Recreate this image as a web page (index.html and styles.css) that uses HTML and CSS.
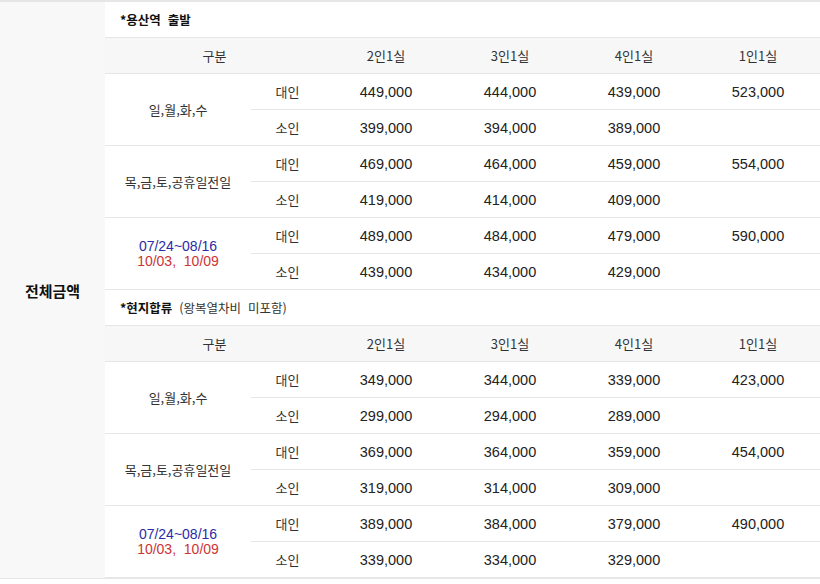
FILE: index.html
```html
<!DOCTYPE html>
<html lang="ko">
<head>
<meta charset="utf-8">
<link rel="stylesheet" href="styles.css">
</head>
<body>
<div class="price-box">
  <div class="aside"><span class="aside-title">전체금액</span></div>
  <div class="content">
    <section class="section">
      <div class="sec-title"><b>*용산역&nbsp; 출발</b></div>
      <div class="grid">
        <div class="cell head span2 ko">구분</div>
        <div class="cell head ko">2인1실</div>
        <div class="cell head ko">3인1실</div>
        <div class="cell head ko">4인1실</div>
        <div class="cell head ko">1인1실</div>

        <div class="cell group ko">일,월,화,수</div>
        <div class="cell ko">대인</div>
        <div class="cell num">449,000</div>
        <div class="cell num">444,000</div>
        <div class="cell num">439,000</div>
        <div class="cell num">523,000</div>
        <div class="cell ko">소인</div>
        <div class="cell num">399,000</div>
        <div class="cell num">394,000</div>
        <div class="cell num">389,000</div>
        <div class="cell num"></div>

        <div class="cell group ko">목,금,토,공휴일전일</div>
        <div class="cell ko">대인</div>
        <div class="cell num">469,000</div>
        <div class="cell num">464,000</div>
        <div class="cell num">459,000</div>
        <div class="cell num">554,000</div>
        <div class="cell ko">소인</div>
        <div class="cell num">419,000</div>
        <div class="cell num">414,000</div>
        <div class="cell num">409,000</div>
        <div class="cell num"></div>

        <div class="cell group dates"><span class="blue">07/24~08/16</span><span class="red">10/03,&nbsp; 10/09</span></div>
        <div class="cell ko">대인</div>
        <div class="cell num">489,000</div>
        <div class="cell num">484,000</div>
        <div class="cell num">479,000</div>
        <div class="cell num">590,000</div>
        <div class="cell ko">소인</div>
        <div class="cell num">439,000</div>
        <div class="cell num">434,000</div>
        <div class="cell num">429,000</div>
        <div class="cell num"></div>
      </div>
    </section>
    <section class="section">
      <div class="sec-title"><b>*현지합류</b>&nbsp; <span class="note">(왕복열차비&nbsp; 미포함)</span></div>
      <div class="grid">
        <div class="cell head span2 ko">구분</div>
        <div class="cell head ko">2인1실</div>
        <div class="cell head ko">3인1실</div>
        <div class="cell head ko">4인1실</div>
        <div class="cell head ko">1인1실</div>

        <div class="cell group ko">일,월,화,수</div>
        <div class="cell ko">대인</div>
        <div class="cell num">349,000</div>
        <div class="cell num">344,000</div>
        <div class="cell num">339,000</div>
        <div class="cell num">423,000</div>
        <div class="cell ko">소인</div>
        <div class="cell num">299,000</div>
        <div class="cell num">294,000</div>
        <div class="cell num">289,000</div>
        <div class="cell num"></div>

        <div class="cell group ko">목,금,토,공휴일전일</div>
        <div class="cell ko">대인</div>
        <div class="cell num">369,000</div>
        <div class="cell num">364,000</div>
        <div class="cell num">359,000</div>
        <div class="cell num">454,000</div>
        <div class="cell ko">소인</div>
        <div class="cell num">319,000</div>
        <div class="cell num">314,000</div>
        <div class="cell num">309,000</div>
        <div class="cell num"></div>

        <div class="cell group dates"><span class="blue">07/24~08/16</span><span class="red">10/03,&nbsp; 10/09</span></div>
        <div class="cell ko">대인</div>
        <div class="cell num">389,000</div>
        <div class="cell num">384,000</div>
        <div class="cell num">379,000</div>
        <div class="cell num">490,000</div>
        <div class="cell ko">소인</div>
        <div class="cell num">339,000</div>
        <div class="cell num">334,000</div>
        <div class="cell num">329,000</div>
        <div class="cell num"></div>
      </div>
    </section>
  </div>
</div>
</body>
</html>
```

FILE: styles.css
```css
html, body {
  margin: 0;
  padding: 0;
  background: #fff;
}
body {
  font-family: "Liberation Sans", "Noto Sans CJK KR", sans-serif;
  color: #222;
}
.price-box {
  display: flex;
  width: 820px;
  border-top: 2px solid #e6e6e6;
  border-bottom: 1px solid #e6e6e6;
}
.aside {
  width: 105px;
  flex: none;
  background: #f8f8f8;
  display: flex;
  align-items: center;
  justify-content: center;
}
.aside-title {
  font-family: "Noto Sans CJK KR", sans-serif;
  font-weight: 700;
  font-size: 15px;
  color: #111;
}
.content {
  flex: 1;
  display: flex;
  flex-direction: column;
}
.sec-title {
  height: 36px;
  box-sizing: border-box;
  border-bottom: 1px solid #e6e6e6;
  display: flex;
  align-items: center;
  padding-left: 15px;
  font-family: "Noto Sans CJK KR", sans-serif;
  font-size: 12.5px;
  color: #111;
  white-space: pre;
}
.sec-title b {
  font-weight: 700;
}
.note {
  color: #333;
  font-weight: 400;
}
.grid {
  display: grid;
  grid-template-columns: 146px 73px repeat(4, 1fr);
  grid-auto-rows: 36px;
}
.cell {
  box-sizing: border-box;
  border-bottom: 1px solid #e6e6e6;
  display: flex;
  align-items: center;
  justify-content: center;
  font-size: 14.5px;
  color: #222;
}
.ko {
  font-family: "Noto Sans CJK KR", sans-serif;
  font-size: 13px;
  color: #333;
}
.head {
  background: #f7f7f7;
}
.span2 {
  grid-column: span 2;
}
.group {
  grid-row: span 2;
}
.dates {
  flex-direction: column;
  font-size: 14px;
  line-height: 15px;
}
.blue {
  color: #2b2ba8;
}
.red {
  color: #cc3333;
}
```
